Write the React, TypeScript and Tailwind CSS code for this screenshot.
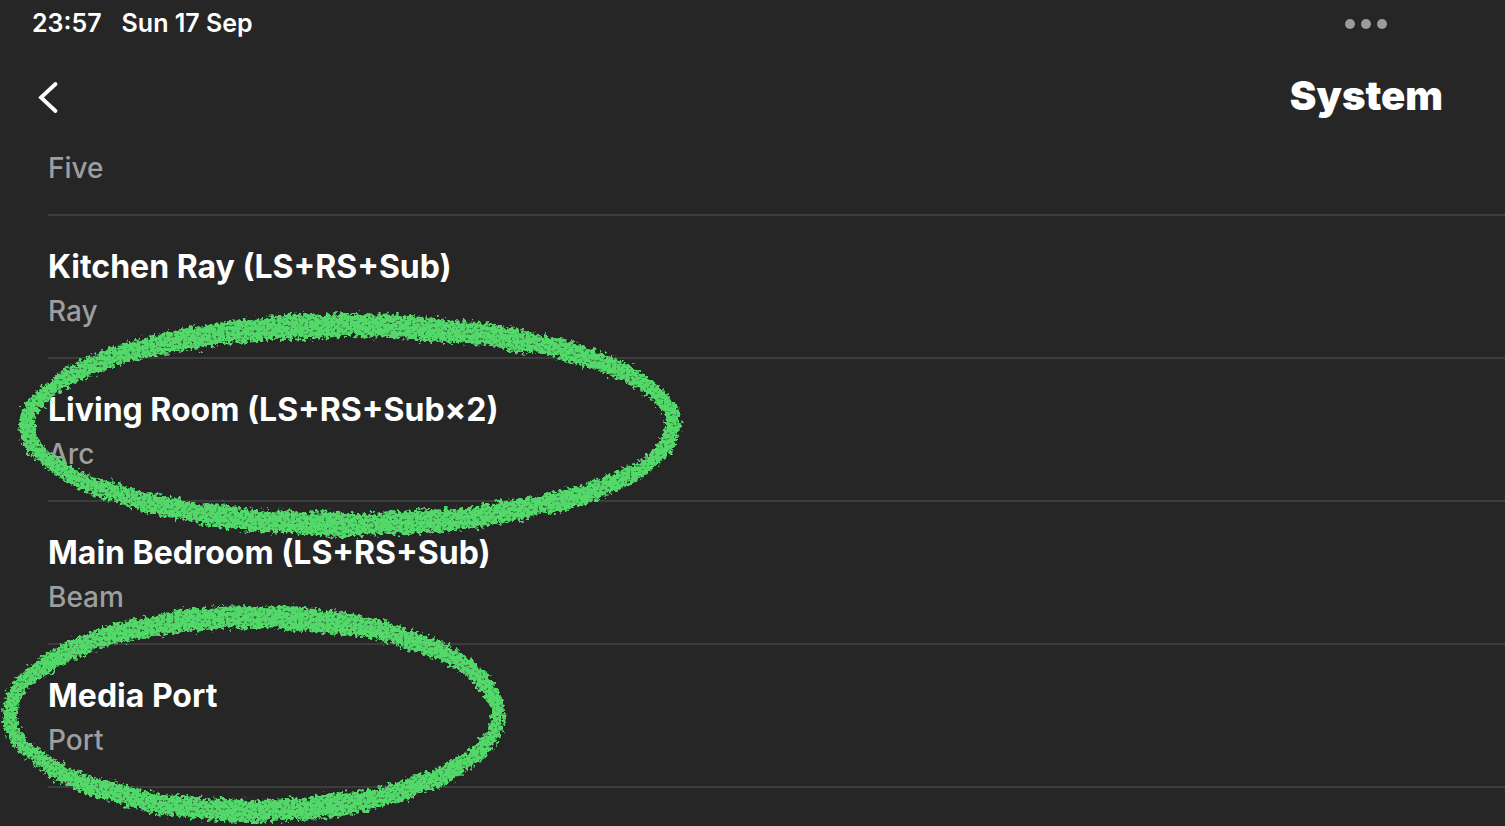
type Room = {
  name: string;
  product: string;
  marker?: Marker;
};

type Marker = {
  className: string;
  width: number;
  height: number;
  cx: number;
  cy: number;
  outer: [number, number];
  inner: [number, number];
};

const rooms: Room[] = [
  { name: "Kitchen Ray (LS+RS+Sub)", product: "Ray" },
  {
    name: "Living Room (LS+RS+Sub×2)",
    product: "Arc",
    marker: {
      className: "-top-16",
      width: 710,
      height: 260,
      cx: 350,
      cy: 130,
      outer: [330, 111],
      inner: [315, 88],
    },
  },
  { name: "Main Bedroom (LS+RS+Sub)", product: "Beam" },
  {
    name: "Media Port",
    product: "Port",
    marker: {
      className: "-top-16",
      width: 530,
      height: 260,
      cx: 254,
      cy: 133,
      outer: [251, 108],
      inner: [236, 86],
    },
  },
];

const ellipse = (cx: number, cy: number, [rx, ry]: [number, number]) =>
  `M${cx - rx} ${cy}a${rx} ${ry} 0 1 0 ${rx * 2} 0a${rx} ${ry} 0 1 0 ${-rx * 2} 0Z`;

const CrayonFilter = () => (
  <svg className="absolute size-0" aria-hidden="true">
    <filter
      id="crayon"
      x="-5%"
      y="-10%"
      width="110%"
      height="120%"
      colorInterpolationFilters="sRGB"
    >
      <feTurbulence type="fractalNoise" baseFrequency="0.03" numOctaves="2" seed="7" result="wobble" />
      <feDisplacementMap
        in="SourceGraphic"
        in2="wobble"
        scale="6"
        xChannelSelector="R"
        yChannelSelector="G"
        result="bent"
      />
      <feTurbulence type="fractalNoise" baseFrequency="0.27" numOctaves="2" seed="4" result="rough" />
      <feDisplacementMap
        in="bent"
        in2="rough"
        scale="12"
        xChannelSelector="R"
        yChannelSelector="G"
        result="edge"
      />
      <feTurbulence type="fractalNoise" baseFrequency="0.37" numOctaves="2" seed="11" />
      <feColorMatrix values="0 0 0 0 0  0 0 0 0 0  0 0 0 0 0  3 0 0 0 -0.25" result="grain" />
      <feComposite in="edge" in2="grain" operator="in" />
      <feGaussianBlur stdDeviation="0.6" />
    </filter>
  </svg>
);

const MarkerRing = ({ marker }: { marker: Marker }) => (
  <svg
    className={`pointer-events-none absolute left-0 z-10 max-w-none ${marker.className}`}
    width={marker.width}
    height={marker.height}
    aria-hidden="true"
  >
    <path
      d={ellipse(marker.cx, marker.cy, marker.outer) + ellipse(marker.cx, marker.cy, marker.inner)}
      fill="#53d86a"
      fillRule="evenodd"
      filter="url(#crayon)"
    />
  </svg>
);

const StatusBar = () => (
  <div className="flex h-12 items-center justify-between pr-[118px] pl-8 text-[25px] font-semibold">
    <div className="flex gap-5">
      <span>23:57</span>
      <span>Sun 17 Sep</span>
    </div>
    <button type="button" aria-label="Multitasking" className="flex gap-1.5">
      <span className="size-2.5 rounded-full bg-[#9b9b9b]" />
      <span className="size-2.5 rounded-full bg-[#9b9b9b]" />
      <span className="size-2.5 rounded-full bg-[#9b9b9b]" />
    </button>
  </div>
);

const Header = () => (
  <header className="flex h-24 items-center justify-between pr-[62px] pl-8">
    <button type="button" aria-label="Back">
      <svg width="32" height="40" viewBox="0 0 32 40" fill="none">
        <path
          d="M23.5 8 9 21.5 23.5 35"
          stroke="white"
          strokeWidth="3.8"
          strokeLinecap="round"
          strokeLinejoin="miter"
        />
      </svg>
    </button>
    <h1 className="text-[40px] leading-12 font-black">System</h1>
  </header>
);

const Product = ({ children }: { children: string }) => (
  <p className="text-[28px] leading-8 font-medium text-[#9e9e9e]">{children}</p>
);

const RoomRow = ({ room }: { room: Room }) => (
  <li className="relative pl-12">
    <div className="border-b-2 border-[#3d3d3d] pt-[31px] pb-[30px]">
      <h2 className="mb-2 text-[32px] leading-10 font-[650]">{room.name}</h2>
      <Product>{room.product}</Product>
    </div>
    {room.marker && <MarkerRing marker={room.marker} />}
  </li>
);

const App = () => (
  <div className="min-h-screen overflow-hidden bg-[#262626] font-['Inter',sans-serif] text-white">
    <CrayonFilter />
    <StatusBar />
    <Header />
    <ul>
      <li className="pl-12">
        <div className="border-b-2 border-[#3d3d3d] pt-2 pb-[30px]">
          <Product>Five</Product>
        </div>
      </li>
      {rooms.map((room) => (
        <RoomRow key={room.name} room={room} />
      ))}
    </ul>
  </div>
);

export default App;
